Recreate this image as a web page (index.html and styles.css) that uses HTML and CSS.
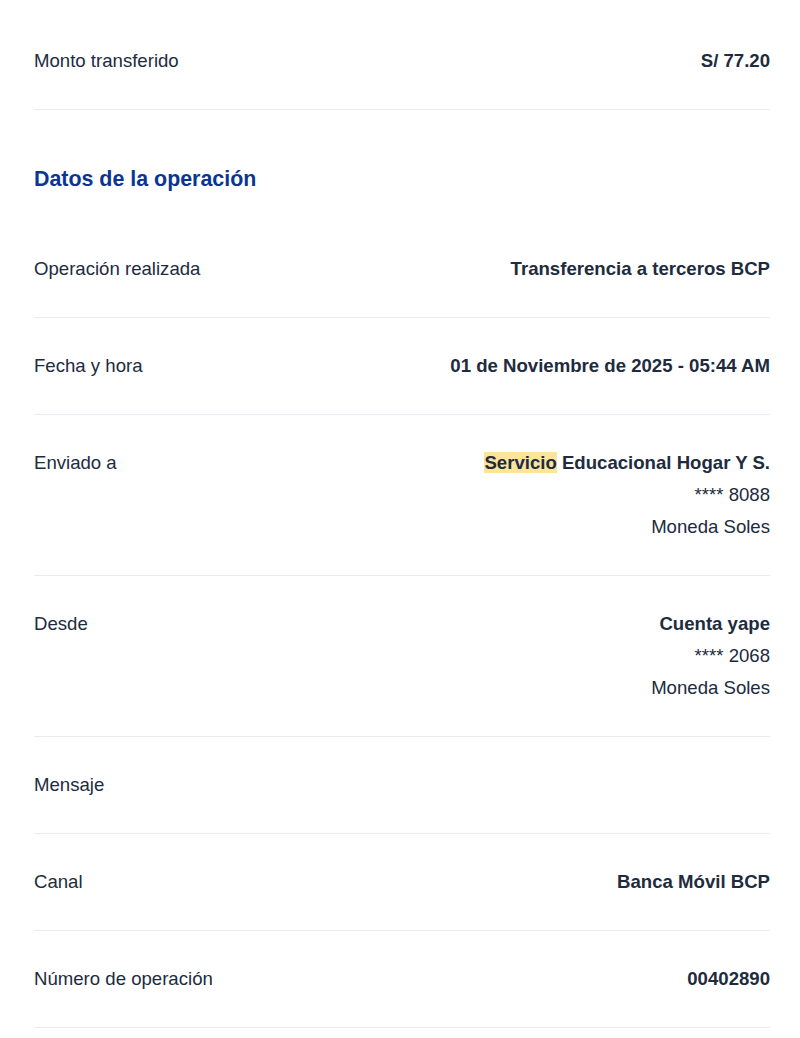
FILE: index.html
```html
<!DOCTYPE html>
<html lang="es">
<head>
  <meta charset="UTF-8">
  <meta name="viewport" content="width=device-width, initial-scale=1.0">
  <title>Constancia de operación</title>
  <link rel="stylesheet" href="styles.css">
</head>
<body>
  <div id="container">
    <div class="row">
      <div class="label">Monto transferido</div>
      <div class="value"><b>S/ 77.20</b></div>
    </div>

    <h2 class="section-title">Datos de la operación</h2>

    <div class="row">
      <div class="label">Operación realizada</div>
      <div class="value"><b>Transferencia a terceros BCP</b></div>
    </div>
    <div class="row">
      <div class="label">Fecha y hora</div>
      <div class="value"><b>01 de Noviembre de 2025 - 05:44 AM</b></div>
    </div>
    <div class="row">
      <div class="label">Enviado a</div>
      <div class="value">
        <b><mark>Servicio</mark> Educacional Hogar Y S.</b>
        <span>**** 8088</span>
        <span>Moneda Soles</span>
      </div>
    </div>
    <div class="row">
      <div class="label">Desde</div>
      <div class="value">
        <b>Cuenta yape</b>
        <span>**** 2068</span>
        <span>Moneda Soles</span>
      </div>
    </div>
    <div class="row">
      <div class="label">Mensaje</div>
      <div class="value"></div>
    </div>
    <div class="row">
      <div class="label">Canal</div>
      <div class="value"><b>Banca Móvil BCP</b></div>
    </div>
    <div class="row">
      <div class="label">Número de operación</div>
      <div class="value"><b>00402890</b></div>
    </div>
  </div>
</body>
</html>
```

FILE: styles.css
```css
body {
  font-family: "Liberation Sans", Arial, sans-serif;
  margin: 0;
  padding: 0;
  background-color: #fff;
  color: #212b3e;
}
#container {
  margin: 13px 30px 0 34px;
}
.row {
  display: flex;
  justify-content: space-between;
  padding: 32px 0;
  border-bottom: 1px solid #e8ebf0;
  font-size: 18.6px;
  line-height: 32px;
}
.value {
  display: flex;
  flex-direction: column;
  align-items: flex-end;
  text-align: right;
}
.value b {
  font-weight: bold;
}
mark {
  background-color: #fde49b;
  color: inherit;
  padding: 0;
}
.section-title {
  margin: 0;
  padding: 53px 0 26px;
  font-size: 21.4px;
  line-height: 32px;
  color: #0b3593;
}
```
